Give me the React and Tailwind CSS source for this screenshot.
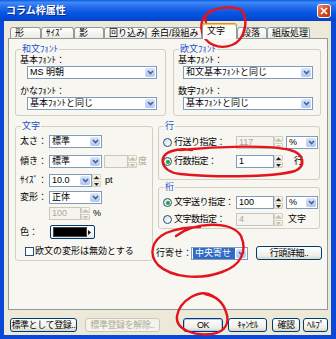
import React from "react";

function Chevron() {
  return (
    <svg width="7" height="5" viewBox="0 0 7 5">
      <path d="M1 1L3.5 3.6L6 1" fill="none" stroke="#4d6185" strokeWidth="1.6" />
    </svg>
  );
}

function Combo({ className = "", text, selected }) {
  return (
    <div className={`flex h-[13px] shrink-0 border border-[#7f9db9] bg-white ${className}`}>
      <div className="flex flex-1 items-center overflow-hidden">
        <span
          className={`whitespace-nowrap px-[2px] leading-[11px] ${
            selected ? "ml-px flex-1 bg-[#316ac5] text-white" : "text-black"
          }`}
        >
          {text}
        </span>
      </div>
      <div className="m-px flex w-[10px] items-center justify-center rounded-[2px] bg-[linear-gradient(#d8e4fc,#b2c6f5)]">
        <Chevron />
      </div>
    </div>
  );
}

function Tri({ up, off }) {
  return (
    <svg width="5" height="3" viewBox="0 0 5 3">
      <path d={up ? "M0 3L2.5 0L5 3Z" : "M0 0L2.5 3L5 0Z"} fill={off ? "#c2bfb2" : "#222"} />
    </svg>
  );
}

function Spin({ off }) {
  const box =
    "flex flex-1 items-center justify-center rounded-[1px] border border-[#d2cfc1] bg-[linear-gradient(#fbfbf8,#e4e1d5)]";
  return (
    <div className="flex h-[13px] w-[9px] shrink-0 flex-col gap-px">
      <div className={box}>
        <Tri up off={off} />
      </div>
      <div className={box}>
        <Tri off={off} />
      </div>
    </div>
  );
}

function Field({ className = "", text, off }) {
  return (
    <div
      className={`flex h-[13px] shrink-0 items-center border pl-[2px] ${
        off ? "border-[#c9c7ba] bg-[#f4f3ee] text-[#aca899]" : "border-[#7f9db9] bg-white text-black"
      } ${className}`}
    >
      {text}
    </div>
  );
}

function Radio({ on }) {
  return (
    <span className="flex h-[9px] w-[9px] shrink-0 items-center justify-center rounded-full border border-[#1c5180] bg-[linear-gradient(135deg,#dcdcd6,#ffffff)]">
      {on && <span className="h-[4px] w-[4px] rounded-full bg-[#27a427]" />}
    </span>
  );
}

function Group({ label, className = "", children }) {
  return (
    <div className={`relative shrink-0 rounded-[3px] border border-[#d0d0bf] ${className}`}>
      <span className="absolute -top-[6px] left-[5px] bg-[#f7f6f1] px-px leading-[10px] text-[#2150c8]">
        {label}
      </span>
      {children}
    </div>
  );
}

function Btn({ className = "", children, off, def }) {
  return (
    <div
      className={`flex shrink-0 items-center justify-center whitespace-nowrap rounded-[3px] border tracking-[-0.4px] ${
        off
          ? "border-[#c9c7ba] bg-[#f5f4ea] text-[#aca899]"
          : "border-[#003c74] bg-[linear-gradient(#ffffff,#f0efe8_70%,#d9d6c9)] text-black"
      } ${def ? "shadow-[inset_0_0_0_1px_#b4c8f0]" : ""} ${className}`}
    >
      {children}
    </div>
  );
}

function Tab({ className = "", children, active }) {
  if (active) {
    return (
      <div
        className={`relative z-10 -mb-px flex h-[16px] shrink-0 items-start rounded-t-[3px] border border-b-0 border-[#919b9c] border-t-[#e68b2c] bg-[#fcfcfb] pl-[4px] pt-[3px] shadow-[inset_0_1px_0_#ffc73c] ${className}`}
      >
        {children}
      </div>
    );
  }
  return (
    <div
      className={`flex h-[11px] shrink-0 items-center rounded-t-[3px] border border-b-0 border-[#919b9c] bg-[linear-gradient(#ffffff,#ecebe6)] pl-[4px] ${className}`}
    >
      {children}
    </div>
  );
}

function Row({ label, className = "", children }) {
  return (
    <div className={`flex h-[13px] items-center ${className}`}>
      <span className="w-[29px] shrink-0 whitespace-nowrap">{label}</span>
      {children}
    </div>
  );
}

function Marks() {
  const p = {
    fill: "none",
    stroke: "#e3141c",
    strokeWidth: 2.4,
    strokeLinecap: "round",
    strokeLinejoin: "round",
  };
  return (
    <svg className="pointer-events-none absolute left-0 top-0" width="336" height="339" viewBox="0 0 336 339">
      <path {...p} d="M206 22C199 8 236 3 243 12C248 22 245 40 232 45C219 50 205 44 202 32C200 23 203 15 213 11" />
      <path {...p} d="M180 150C220 146 270 145 290 150C305 154 306 166 295 171C270 178 210 177 180 174C160 172 157 155 172 151C178 149 186 149 192 150" />
      <path {...p} d="M176 236C194 222 232 220 241 236C248 252 240 266 222 272C200 280 172 278 158 265C148 254 152 240 166 233C176 229 188 227 200 227" />
      <path {...p} d="M213 296C200 288 180 300 177 316C175 330 195 336 212 334C226 332 230 322 226 312C223 302 216 296 205 294" />
    </svg>
  );
}

export default function App() {
  return (
    <div className="relative h-[339px] w-[336px] overflow-hidden bg-[#0a48d8] font-['Liberation_Sans','Noto_Sans_CJK_JP',sans-serif] text-[9px] leading-none text-black">
      {/* title bar */}
      <div className="flex h-[21px] items-center justify-between bg-[linear-gradient(to_bottom,#0b5ce6_0%,#3f8cf7_12%,#2a6fec_30%,#0757e2_60%,#0349d6_88%,#0a3fbf_100%)] pl-[6px] pr-[5px]">
        <span className="text-[10px] font-bold text-white [text-shadow:1px_1px_0_#0a2a8a]">コラム枠属性</span>
        <div className="flex h-[14px] w-[14px] items-center justify-center rounded-[3px] border border-white bg-[linear-gradient(135deg,#ee8a6c,#d2461f_60%,#b8320f)]">
          <svg width="8" height="8" viewBox="0 0 8 8">
            <path d="M1 1L7 7M7 1L1 7" stroke="#fff" strokeWidth="1.7" />
          </svg>
        </div>
      </div>

      {/* body */}
      <div className="ml-[4px] mr-[5px] flex h-[314px] flex-col bg-[#ece9d8] pt-[2px]">
        {/* tabs */}
        <div className="ml-[6px] flex h-[15px] items-end">
          <Tab className="w-[31px]">形</Tab>
          <Tab className="w-[33px]">ｻｲｽﾞ</Tab>
          <Tab className="w-[30px]">影</Tab>
          <Tab className="w-[42px]">回り込み</Tab>
          <Tab className="w-[56px]">余白/段組み</Tab>
          <Tab active className="w-[35px]">文字</Tab>
          <Tab className="w-[30px]">段落</Tab>
          <Tab className="w-[43px]">組版処理</Tab>
        </div>

        {/* panel */}
        <div className="ml-[4px] h-[272px] w-[320px] border border-[#919b9c] bg-[#f7f6f1] pl-[6px] pt-[10px]">
          <div className="flex gap-[7px]">
            <Group label="和文ﾌｫﾝﾄ" className="h-[67px] w-[151px] pl-[4px] pt-[5px]">
              <div className="leading-[11px]">基本ﾌｫﾝﾄ：</div>
              <Combo className="ml-[7px] w-[130px]" text="MS 明朝" />
              <div className="mt-[7px] leading-[11px]">かなﾌｫﾝﾄ：</div>
              <Combo className="ml-[7px] w-[130px]" text="基本ﾌｫﾝﾄと同じ" />
            </Group>
            <Group label="欧文ﾌｫﾝﾄ" className="h-[67px] w-[148px] pl-[4px] pt-[5px]">
              <div className="leading-[11px]">基本ﾌｫﾝﾄ：</div>
              <Combo className="ml-[5px] w-[130px]" text="和文基本ﾌｫﾝﾄと同じ" />
              <div className="mt-[7px] leading-[11px]">数字ﾌｫﾝﾄ：</div>
              <Combo className="ml-[5px] w-[130px]" text="基本ﾌｫﾝﾄと同じ" />
            </Group>
          </div>

          <div className="mt-[10px] flex gap-[5px]">
            <Group label="文字" className="h-[135px] w-[138px] pl-[4px] pt-[8px]">
              <Row label="太さ：">
                <Combo className="w-[53px]" text="標準" />
              </Row>
              <Row label="傾き：" className="mt-[7px]">
                <Combo className="w-[53px]" text="標準" />
                <Field off className="ml-[2px] w-[24px]" text="" />
                <Spin off />
                <span className="ml-px text-[#aca899]">度</span>
              </Row>
              <Row label="ｻｲｽﾞ：" className="mt-[6px]">
                <Combo className="w-[43px]" text="10.0" />
                <Spin />
                <span className="ml-[4px]">pt</span>
              </Row>
              <Row label="変形：" className="mt-[4px]">
                <Combo className="w-[53px]" text="正体" />
              </Row>
              <Row label="" className="mt-[3px]">
                <Field off className="w-[32px]" text="100" />
                <Spin off />
                <span className="ml-[3px]">%</span>
              </Row>
              <div className="mt-[5px] flex h-[14px] items-center">
                <span className="w-[30px] shrink-0">色：</span>
                <div className="flex h-[14px] w-[45px] items-center gap-px rounded-[2px] border border-[#003c74] bg-[linear-gradient(#ffffff,#ecebe6)] px-[2px]">
                  <div className="h-[10px] w-[34px] border border-[#444] bg-black" />
                  <svg width="3" height="5" viewBox="0 0 3 5">
                    <path d="M0 0L3 2.5L0 5Z" fill="#111" />
                  </svg>
                </div>
              </div>
              <div className="mt-[7px] flex h-[11px] items-center pl-[5px]">
                <span className="h-[9px] w-[9px] shrink-0 border border-[#1c5180] bg-white" />
                <span className="ml-px whitespace-nowrap">欧文の変形は無効とする</span>
              </div>
            </Group>

            <div className="flex w-[162px] shrink-0 flex-col">
              <Group label="行" className="h-[54px] pl-[4px] pt-[9px]">
                <div className="flex h-[13px] items-center">
                  <Radio />
                  <span className="ml-[2px] w-[62px] shrink-0 whitespace-nowrap tracking-[-0.5px]">行送り指定：</span>
                  <Field off className="w-[38px]" text="117" />
                  <Spin off />
                  <Combo className="ml-[3px] w-[32px]" text="%" />
                </div>
                <div className="mt-[6px] flex h-[13px] items-center">
                  <Radio on />
                  <span className="ml-[2px] w-[62px] shrink-0 whitespace-nowrap tracking-[-0.5px]">行数指定：</span>
                  <Field className="w-[38px]" text="1" />
                  <Spin />
                  <span className="ml-[11px]">行</span>
                </div>
              </Group>
              <Group label="桁" className="mt-[7px] h-[42px] pl-[4px] pt-[8px]">
                <div className="flex h-[13px] items-center">
                  <Radio on />
                  <span className="ml-[2px] w-[62px] shrink-0 whitespace-nowrap tracking-[-0.5px]">文字送り指定：</span>
                  <Field className="w-[38px]" text="100" />
                  <Spin />
                  <Combo className="ml-[3px] w-[32px]" text="%" />
                </div>
                <div className="mt-[4px] flex h-[13px] items-center">
                  <Radio />
                  <span className="ml-[2px] w-[62px] shrink-0 whitespace-nowrap tracking-[-0.5px]">文字数指定：</span>
                  <Field off className="w-[38px]" text="4" />
                  <Spin off />
                  <span className="ml-[5px]">文字</span>
                </div>
              </Group>
              <div className="-ml-[2px] mt-[17px] flex h-[14px] items-center">
                <span className="w-[35px] shrink-0 whitespace-nowrap">行寄せ：</span>
                <Combo selected className="w-[57px]" text="中央寄せ" />
                <Btn className="ml-[8px] h-[14px] w-[66px]">行頭詳細..</Btn>
              </div>
            </div>
          </div>
        </div>

        {/* bottom buttons */}
        <div className="mt-[8px] flex h-[14px] pl-[6px]">
          <Btn className="w-[67px]">標準として登録..</Btn>
          <Btn off className="ml-[8px] w-[75px]">標準登録を解除..</Btn>
          <Btn def className="ml-[23px] w-[40px]">OK</Btn>
          <Btn className="ml-[5px] w-[39px]">ｷｬﾝｾﾙ</Btn>
          <Btn className="ml-[5px] w-[28px]">確認</Btn>
          <Btn className="ml-[3px] w-[25px]">ﾍﾙﾌﾟ</Btn>
        </div>
      </div>

      <Marks />
    </div>
  );
}
